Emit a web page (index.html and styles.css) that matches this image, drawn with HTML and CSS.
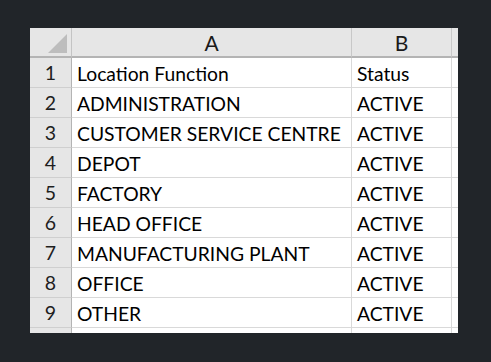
FILE: index.html
```html
<!DOCTYPE html>
<html lang="en">
<head>
  <meta charset="UTF-8">
  <title>Location Functions</title>
  <link rel="stylesheet" href="styles.css">
</head>
<body>
  <div class="sheet">
    <div class="corner">
      <svg width="20" height="20" viewBox="0 0 20 20"><polygon points="20,0 20,20 0,20" fill="#bdbdbd"/></svg>
    </div>
    <div class="colhead">A</div>
    <div class="colhead">B</div>
    <div class="colhead edge"></div>

    <div class="rowhead">1</div><div class="cell">Location Function</div><div class="cell">Status</div><div class="cell edge"></div>
    <div class="rowhead">2</div><div class="cell">ADMINISTRATION</div><div class="cell">ACTIVE</div><div class="cell edge"></div>
    <div class="rowhead">3</div><div class="cell">CUSTOMER SERVICE CENTRE</div><div class="cell">ACTIVE</div><div class="cell edge"></div>
    <div class="rowhead">4</div><div class="cell">DEPOT</div><div class="cell">ACTIVE</div><div class="cell edge"></div>
    <div class="rowhead">5</div><div class="cell">FACTORY</div><div class="cell">ACTIVE</div><div class="cell edge"></div>
    <div class="rowhead">6</div><div class="cell">HEAD OFFICE</div><div class="cell">ACTIVE</div><div class="cell edge"></div>
    <div class="rowhead">7</div><div class="cell">MANUFACTURING PLANT</div><div class="cell">ACTIVE</div><div class="cell edge"></div>
    <div class="rowhead">8</div><div class="cell">OFFICE</div><div class="cell">ACTIVE</div><div class="cell edge"></div>
    <div class="rowhead">9</div><div class="cell">OTHER</div><div class="cell">ACTIVE</div><div class="cell edge"></div>
    <div class="rowhead"></div><div class="cell"></div><div class="cell"></div><div class="cell edge"></div>
  </div>
</body>
</html>
```

FILE: styles.css
```css
body {
  margin: 0;
  background: #212529;
  font-family: Lato, 'Liberation Sans', sans-serif;
}
.sheet {
  display: grid;
  grid-template-columns: 42px 280px 100px 6px;
  grid-auto-rows: 30px;
  width: 428px;
  height: 305px;
  overflow: hidden;
  margin: 28px 0 0 30px;
  background: #fff;
}
.corner,
.colhead,
.rowhead,
.cell {
  box-sizing: border-box;
  border-right: 1px solid #d9d9d9;
  border-bottom: 1px solid #d9d9d9;
  white-space: nowrap;
  overflow: hidden;
}
.corner {
  background: #e6e6e6;
  border-right-color: #c4c4c4;
  border-bottom: 2px solid #b4b4b4;
  display: flex;
  align-items: flex-end;
  justify-content: flex-end;
  padding: 0 4px 3px 0;
}
.corner svg {
  width: 19px;
  height: 19px;
  display: block;
}
.colhead {
  background: #e6e6e6;
  border-right-color: #c8c8c8;
  border-bottom: 2px solid #b4b4b4;
  text-align: center;
  font-size: 21px;
  line-height: 28px;
  padding-top: 1px;
  color: #1a1a1a;
}
.rowhead {
  background: #e6e6e6;
  border-right-color: #b4b4b4;
  border-bottom-color: #cfcfcf;
  text-align: center;
  font-size: 19.5px;
  line-height: 28px;
  padding-top: 1px;
  color: #1e1e1e;
}
.cell {
  font-size: 19.3px;
  line-height: 28px;
  padding: 2px 0 0 5px;
  color: #000;
}
.edge {
  border-right: none;
}
```
